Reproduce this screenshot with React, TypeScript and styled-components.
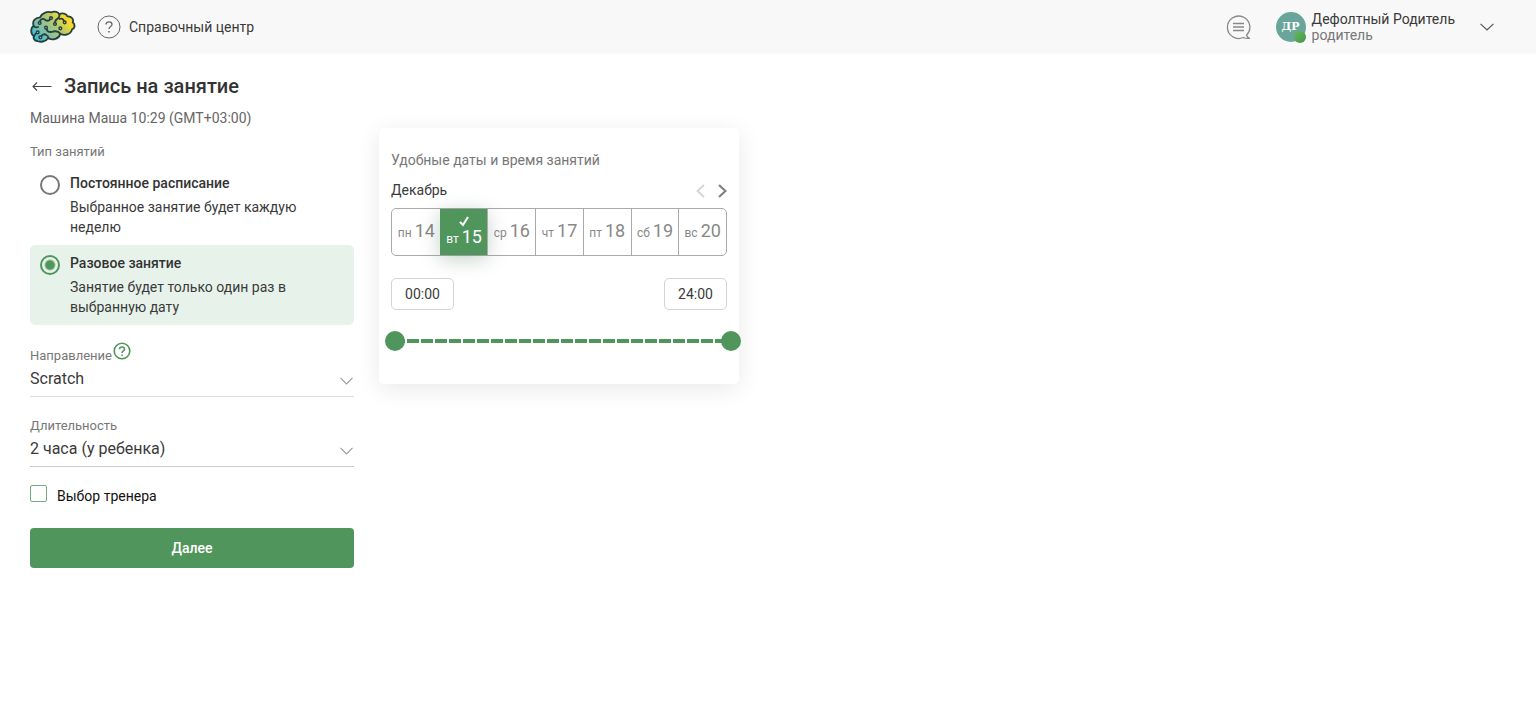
import React, { useState } from "react";
import styled, { createGlobalStyle } from "styled-components";

const green = "#50965c";

const GlobalStyle = createGlobalStyle`
  *, *::before, *::after { box-sizing: border-box; }
  body {
    margin: 0;
    background: #fff;
    color: #3a3a3a;
    font-family: Roboto, "Liberation Sans", sans-serif;
    font-size: 14px;
    line-height: 20px;
  }
  button, input, select { font: inherit; color: inherit; margin: 0; }
  h1, h2, p, fieldset { margin: 0; padding: 0; border: 0; }
  svg { display: block; flex: none; }
`;

const Header = styled.header`
  display: flex;
  align-items: center;
  justify-content: space-between;
  height: 54px;
  padding: 0 42px 0 30px;
  background: #f8f8f8;
`;

const HeaderGroup = styled.div<{ $gap: number }>`
  display: flex;
  align-items: center;
  gap: ${(p) => p.$gap}px;
`;

const HelpLink = styled.a`
  display: flex;
  align-items: center;
  gap: 8px;
  color: inherit;
  text-decoration: none;
`;

const IconButton = styled.button`
  display: flex;
  padding: 0;
  border: 0;
  background: none;
  cursor: pointer;
  &:disabled { cursor: default; }
`;

const User = styled.div`
  display: flex;
  align-items: center;
  gap: 6px;
`;

const Avatar = styled.div`
  position: relative;
  display: flex;
  align-items: center;
  justify-content: center;
  width: 30px;
  height: 30px;
  border-radius: 50%;
  background: #6aa59c;
  color: #fff;
  font: bold 11px/14px "DejaVu Serif", "Liberation Serif", serif;
`;

const OnlineDot = styled.span`
  position: absolute;
  right: 0;
  bottom: -1px;
  width: 12px;
  height: 12px;
  border-radius: 50%;
  background: linear-gradient(135deg, #64bb58, #449450);
`;

const UserText = styled.div`
  line-height: 16px;
`;

const UserRole = styled.div`
  color: #777;
`;

const Page = styled.main`
  display: flex;
  flex-wrap: wrap;
  align-items: flex-start;
  gap: 25px;
  padding: 20px 30px;
`;

const Form = styled.form`
  display: flex;
  flex-direction: column;
  width: 324px;
`;

const TitleRow = styled.div`
  display: flex;
  align-items: center;
  gap: 12px;
  height: 24px;
`;

const Title = styled.h1`
  font-size: 20px;
  line-height: 24px;
  font-weight: 500;
  color: #333;
`;

const Student = styled.p`
  margin-top: 10px;
  color: #666;
`;

const Label = styled.label`
  color: #777;
  font-size: 13px;
  line-height: 16px;
`;

const Legend = styled(Label).attrs({ as: "legend" })`
  padding: 0;
  margin-bottom: 5px;
`;

const TypeGroup = styled.fieldset`
  margin-top: 16px;
  min-width: 0;
`;

const TypeOption = styled.label<{ $active: boolean }>`
  display: flex;
  gap: 10px;
  padding: 8px 10px;
  border-radius: 5px;
  background: ${(p) => (p.$active ? "#e7f3ea" : "transparent")};
  cursor: pointer;
`;

const Radio = styled.input.attrs({ type: "radio" })`
  flex: none;
  appearance: none;
  width: 20px;
  height: 20px;
  margin-top: 2px;
  border: 2px solid #777;
  border-radius: 50%;
  background: #fff;
  &:checked {
    border-color: ${green};
    background: radial-gradient(circle, ${green} 4px, transparent 6px);
  }
`;

const OptionText = styled.span`
  display: flex;
  flex-direction: column;
  gap: 4px;
`;

const OptionTitle = styled.span`
  font-weight: 500;
  color: #333;
`;

const Fields = styled.div`
  display: flex;
  flex-direction: column;
  gap: 15px;
  margin-top: 17px;
`;

const Field = styled.div`
  display: flex;
  flex-direction: column;
`;

const LabelRow = styled.div`
  display: flex;
  align-items: flex-end;
  height: 22px;
  gap: 1px;
`;

const HelpButton = styled(IconButton)`
  align-self: flex-start;
`;

const SelectBox = styled.div<{ $light?: boolean }>`
  display: grid;
  align-items: center;
  border-bottom: 1px solid ${(p) => (p.$light ? "#ddd" : "#ccc")};
  & > * { grid-area: 1 / 1; }
  & > svg { justify-self: end; pointer-events: none; margin: 2px 1px 0 0; }
`;

const Select = styled.select`
  appearance: none;
  width: 100%;
  height: 32px;
  padding: 0 24px 2px 0;
  border: 0;
  background: none;
  font-size: 16px;
`;

const CheckLabel = styled.label`
  display: flex;
  align-items: flex-start;
  gap: 10px;
  margin-top: 18px;
  color: #111;
  cursor: pointer;
`;

const CheckText = styled.span`
  padding-top: 1px;
`;

const Checkbox = styled.input.attrs({ type: "checkbox" })`
  appearance: none;
  width: 17px;
  height: 17px;
  border: 1px solid #75ad7f;
  border-radius: 2px;
  background: #fff;
  &:checked { background: ${green}; }
`;

const Submit = styled.button`
  height: 40px;
  margin-top: 22px;
  border: 0;
  border-radius: 4px;
  background: ${green};
  color: #fff;
  font-weight: 500;
  cursor: pointer;
`;

const Card = styled.section`
  width: 360px;
  margin-top: 54px;
  padding: 22px 12px 33px;
  border-radius: 5px;
  background: #fff;
  box-shadow: 0 5px 24px rgba(0, 0, 0, 0.09);
`;

const CardTitle = styled.h2`
  color: #777;
  font-size: 14px;
  line-height: 20px;
  font-weight: 400;
`;

const Row = styled.div`
  display: flex;
  align-items: center;
  justify-content: space-between;
`;

const MonthRow = styled(Row)`
  margin: 10px 0 8px;
`;

const MonthNav = styled.div`
  display: flex;
  gap: 11px;
  padding-top: 2px;
`;

const Days = styled.div`
  display: flex;
  height: 48px;
  padding-left: 1px;
  border: 1px solid #aaa;
  border-radius: 5px;
  & > button + button { border-left: 1px solid #aaa; }
  & > button[aria-pressed="true"] { border-color: ${green}; }
`;

const Day = styled.button<{ $active: boolean }>`
  flex: 1;
  display: flex;
  flex-direction: column;
  align-items: center;
  justify-content: center;
  padding: 0;
  border: 0;
  background: ${(p) => (p.$active ? green : "transparent")};
  color: ${(p) => (p.$active ? "#fff" : "#888")};
  box-shadow: ${(p) => (p.$active ? "0 4px 20px rgba(60, 100, 70, 0.3)" : "none")};
  white-space: nowrap;
  cursor: pointer;
`;

const DayText = styled.span`
  font-size: 12px;
  line-height: 20px;
`;

const DayNumber = styled.span`
  font-size: 18px;
`;

const TimeRow = styled(Row)`
  margin-top: 22px;
`;

const TimeInput = styled.input`
  width: 63px;
  height: 32px;
  padding: 0;
  border: 1px solid #d4d4d4;
  border-radius: 5px;
  background: #fff;
  text-align: center;
`;

const Slider = styled.div`
  display: grid;
  align-items: center;
  height: 20px;
  margin: 21px -14px 0 -6px;
  & > * { grid-area: 1 / 1; }
`;

const Track = styled.div`
  height: 4px;
  margin: 0 10px 0 8px;
  background: repeating-linear-gradient(90deg, ${green} 0 12px, transparent 12px 14px);
`;

const Range = styled.input.attrs({ type: "range" })`
  appearance: none;
  width: 100%;
  height: 20px;
  background: none;
  pointer-events: none;
  &::-webkit-slider-thumb {
    appearance: none;
    width: 20px;
    height: 20px;
    border-radius: 50%;
    background: ${green};
    pointer-events: auto;
    cursor: pointer;
  }
`;

const BrainLogo = () => (
  <svg width="46" height="34" viewBox="30 31 138 102" role="img" aria-label="Логотип">
    <defs>
      <linearGradient id="brain" x1="0" y1="0.8" x2="1" y2="0.2">
        <stop offset="0" stopColor="#35bfdc" />
        <stop offset="0.3" stopColor="#83bfa3" />
        <stop offset="0.6" stopColor="#b7cb6b" />
        <stop offset="0.8" stopColor="#f3d831" />
        <stop offset="1" stopColor="#ffd51c" />
      </linearGradient>
    </defs>
    <g stroke="#263f40" strokeWidth="5.5" strokeLinejoin="round" strokeLinecap="round">
      <path
        fill="url(#brain)"
        d="M41 79C36 65 44 54 60 53C66 39 84 34 94 38C104 33 116 38 118 44C126 38 140 42 142 50C156 49 162 60 158 68C168 76 163 88 156 89C153 104 133 110 121 102C117 118 98 124 85 115C77 127 60 128 51 124C42 123 39 114 42 109C30 104 32 83 41 79Z"
      />
      <path fill="none" d="M41 79Q45 85 54 82M59 66Q65 53 75 60Q84 67 91 59M118 44Q120 52 113 57Q105 61 105 70M132 66Q130 54 119 58M79 87Q82 98 94 97Q113 91 121 102M42 109Q47 100 53 99M63 111Q70 100 79 106Q85 108 85 115" />
      <g fill="#d4e2d4" strokeWidth="4.5">
        <circle cx="59" cy="70" r="4" />
        <circle cx="93" cy="55" r="4" />
        <circle cx="105" cy="73" r="4" />
        <circle cx="134" cy="68" r="4" />
        <circle cx="78" cy="84" r="4" />
        <circle cx="121" cy="86" r="4" />
        <circle cx="53" cy="98" r="4" />
        <circle cx="61" cy="113" r="4" />
      </g>
    </g>
  </svg>
);

const QuestionIcon = () => (
  <svg width="24" height="24" viewBox="0 0 24 24" fill="none" stroke="#666">
    <circle cx="12" cy="12" r="11" />
    <path strokeWidth="1.3" d="M9 9.4C9 7.7 10.2 6.8 12 6.8S15 7.8 15 9.4C15 11.5 12 11.6 12 14" />
    <path strokeWidth="1.5" d="M12 16V17.5" />
  </svg>
);

const HintIcon = () => (
  <svg width="18" height="18" viewBox="0 0 18 18" fill="none" stroke={green} strokeWidth="1.6">
    <circle cx="9" cy="9" r="7.8" />
    <path d="M6.5 7.2C6.5 5.7 7.5 5 9 5S11.5 5.8 11.5 7.2C11.5 8.8 9 9 9 11" />
    <path d="M9 12.4V14" />
  </svg>
);

const ChatIcon = () => (
  <svg width="25" height="25" viewBox="0 0 25 25" fill="none" stroke="#888" strokeWidth="1.3">
    <path d="M20.5 20.3A11.2 11.2 0 1 0 17.3 22.5Q20 23.7 23.5 23.4Q21.3 22.4 20.5 20.3Z" strokeLinejoin="round" />
    <path d="M7 8.5H18M7 12H18M7 15.5H18" />
  </svg>
);

const Chevron = ({ color = "#999", size = 13 }: { color?: string; size?: number }) => (
  <svg width={size} height="8" viewBox="0 0 13 8" fill="none" stroke={color} strokeWidth="1.1" preserveAspectRatio="none">
    <path d="M0.5 0.8L6.5 7L12.5 0.8" />
  </svg>
);

const BackIcon = () => (
  <svg width="22" height="12" viewBox="0 0 22 12" fill="none" stroke="#444" strokeWidth="1.1">
    <path d="M21.5 6.5H3M7 2.5L3 6.5L7 10.5" />
  </svg>
);

const NavArrow = ({ next = false }: { next?: boolean }) => (
  <svg width="10" height="14" viewBox="0 0 10 14" fill="none" stroke={next ? "#808080" : "#d4d4d4"} strokeWidth={next ? 2.2 : 1.8}>
    <path d={next ? "M2 1L8.5 7L2 13" : "M8 1L1.5 7L8 13"} />
  </svg>
);

const CheckIcon = () => (
  <svg width="10" height="11" viewBox="0 0 10 11" fill="none" stroke="#fff" strokeWidth="2">
    <path d="M1 6L4 9L9 1" />
  </svg>
);

const types = [
  { id: "regular", title: "Постоянное расписание", text: "Выбранное занятие будет каждую неделю" },
  { id: "single", title: "Разовое занятие", text: "Занятие будет только один раз в выбранную дату" },
];

const days = [
  ["пн", 14],
  ["вт", 15],
  ["ср", 16],
  ["чт", 17],
  ["пт", 18],
  ["сб", 19],
  ["вс", 20],
] as const;

const formatHour = (hour: number) => `${String(hour).padStart(2, "0")}:00`;

export default function App() {
  const [type, setType] = useState("single");
  const [day, setDay] = useState(15);
  const [from, setFrom] = useState(0);
  const [to, setTo] = useState(24);

  return (
    <>
      <GlobalStyle />
      <Header>
        <HeaderGroup $gap={21}>
          <BrainLogo />
          <HelpLink href="#help">
            <QuestionIcon />
            Справочный центр
          </HelpLink>
        </HeaderGroup>
        <HeaderGroup $gap={25}>
          <IconButton type="button" aria-label="Сообщения">
            <ChatIcon />
          </IconButton>
          <User>
            <Avatar>
              ДР
              <OnlineDot />
            </Avatar>
            <UserText>
              <div>Дефолтный Родитель</div>
              <UserRole>родитель</UserRole>
            </UserText>
          </User>
          <IconButton type="button" aria-label="Меню пользователя">
            <Chevron color="#555" size={14} />
          </IconButton>
        </HeaderGroup>
      </Header>
      <Page>
        <Form onSubmit={(e) => e.preventDefault()}>
          <TitleRow>
            <IconButton type="button" aria-label="Назад">
              <BackIcon />
            </IconButton>
            <Title>Запись на занятие</Title>
          </TitleRow>
          <Student>Машина Маша 10:29 (GMT+03:00)</Student>
          <TypeGroup>
            <Legend>Тип занятий</Legend>
            {types.map((t) => (
              <TypeOption key={t.id} $active={type === t.id}>
                <Radio name="type" checked={type === t.id} onChange={() => setType(t.id)} />
                <OptionText>
                  <OptionTitle>{t.title}</OptionTitle>
                  <span>{t.text}</span>
                </OptionText>
              </TypeOption>
            ))}
          </TypeGroup>
          <Fields>
            <Field>
              <LabelRow>
                <Label htmlFor="course">Направление</Label>
                <HelpButton type="button" aria-label="Подсказка">
                  <HintIcon />
                </HelpButton>
              </LabelRow>
              <SelectBox $light>
                <Select id="course">
                  <option>Scratch</option>
                </Select>
                <Chevron />
              </SelectBox>
            </Field>
            <Field>
              <LabelRow>
                <Label htmlFor="duration">Длительность</Label>
              </LabelRow>
              <SelectBox>
                <Select id="duration">
                  <option>2 часа (у ребенка)</option>
                </Select>
                <Chevron />
              </SelectBox>
            </Field>
          </Fields>
          <CheckLabel>
            <Checkbox />
            <CheckText>Выбор тренера</CheckText>
          </CheckLabel>
          <Submit type="submit">Далее</Submit>
        </Form>
        <Card>
          <CardTitle>Удобные даты и время занятий</CardTitle>
          <MonthRow>
            <span>Декабрь</span>
            <MonthNav>
              <IconButton type="button" aria-label="Предыдущая неделя" disabled>
                <NavArrow />
              </IconButton>
              <IconButton type="button" aria-label="Следующая неделя">
                <NavArrow next />
              </IconButton>
            </MonthNav>
          </MonthRow>
          <Days>
            {days.map(([name, number]) => (
              <Day key={number} type="button" $active={day === number} aria-pressed={day === number} onClick={() => setDay(number)}>
                {day === number && <CheckIcon />}
                <DayText>
                  {name} <DayNumber>{number}</DayNumber>
                </DayText>
              </Day>
            ))}
          </Days>
          <TimeRow>
            <TimeInput aria-label="Время от" value={formatHour(from)} readOnly />
            <TimeInput aria-label="Время до" value={formatHour(to)} readOnly />
          </TimeRow>
          <Slider>
            <Track />
            <Range aria-label="Начало" min={0} max={24} value={from} onChange={(e) => setFrom(Math.min(+e.target.value, to - 1))} />
            <Range aria-label="Конец" min={0} max={24} value={to} onChange={(e) => setTo(Math.max(+e.target.value, from + 1))} />
          </Slider>
        </Card>
      </Page>
    </>
  );
}
